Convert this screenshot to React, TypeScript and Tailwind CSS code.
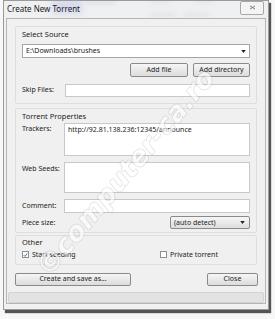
const font = { fontFamily: '"Noto Sans", "Open Sans", sans-serif' };

function Btn({ children, className = "" }: { children: React.ReactNode; className?: string }) {
  return (
    <div
      className={
        "flex items-center justify-center rounded-[2px] border border-[#8a8a8a] bg-gradient-to-b from-[#f6f6f6] to-[#dcdcdc] text-[7px] text-[#222] " +
        className
      }
    >
      {children}
    </div>
  );
}

function Check({ checked }: { checked?: boolean }) {
  return (
    <div className="flex h-[7px] w-[7px] items-center justify-center border border-[#8e8f8f] bg-white">
      {checked && (
        <svg viewBox="0 0 8 8" className="h-[6px] w-[6px]">
          <path d="M1.2 4.2 L3.2 6.2 L6.8 1.4" stroke="#3d5f8d" strokeWidth="1.4" fill="none" />
        </svg>
      )}
    </div>
  );
}

export default function App() {
  return (
    <div className="relative h-[319px] w-[275px] overflow-hidden bg-[#f7f7f7]" style={font}>
      {/* blurred list behind the glass title bar */}
      <div className="absolute left-[52px] top-[-2px] h-[16px] w-[30px] bg-[#7d8fe0] blur-[3px]" />
      <div className="absolute left-[85px] top-[0px] h-[4px] w-[30px] bg-[#a9a9a9] blur-[2px]" />
      <div className="absolute left-[150px] top-[0px] h-[3px] w-[20px] bg-[#b5b5b5] blur-[2px]" />
      <div className="absolute left-[195px] top-[0px] h-[3px] w-[18px] bg-[#b5b5b5] blur-[2px]" />
      <div className="absolute left-[150px] top-[13px] h-[3px] w-[25px] bg-[#b0b0b0] blur-[2px]" />
      <div className="absolute left-[184px] top-[13px] h-[3px] w-[25px] bg-[#b0b0b0] blur-[2px]" />

      {/* window */}
      <div className="relative ml-[3px] flex h-[310px] w-[266px] flex-col border border-[#9a9a9a] bg-[#eceef0]/80 shadow-[2px_3px_1px_#555]">
        {/* title bar */}
        <div className="flex h-[17px] items-center justify-between pl-[3px] pr-[4px]">
          <span className="text-[8px] text-[#1a1a1a]">Create New Torrent</span>
          <div className="mt-[-3px] flex h-[14px] w-[24px] items-center justify-center rounded-[2px] border border-[#a9a9a9] bg-[#f4f4f4]">
            <svg viewBox="0 0 8 6" className="h-[5px] w-[7px]">
              <path d="M1 1 L7 5 M7 1 L1 5" stroke="#777" strokeWidth="1.2" />
            </svg>
          </div>
        </div>

        {/* client area */}
        <div className="mx-[2px] mb-[5px] flex flex-1 flex-col border border-[#b5b5b5] bg-[#f0f0f0] px-[8px] pt-[7px] text-[7px] text-[#222]">
          {/* Select Source */}
          <div className="rounded-[2px] border border-[#dedede] px-[6px] pb-[6px]">
            <div className="mt-[-1px] pt-[3px] text-[7.5px]">Select Source</div>
            <div className="mt-[4px] flex h-[14px] items-center justify-between border border-[#a5a5a5] bg-white pl-[3px] pr-[3px]">
              <span>E:\Downloads\brushes</span>
              <svg viewBox="0 0 6 4" className="h-[3px] w-[5px]">
                <path d="M0 0 H6 L3 4 Z" fill="#222" />
              </svg>
            </div>
            <div className="mt-[5px] flex justify-end gap-[5px]">
              <Btn className="h-[14px] w-[58px]">Add file</Btn>
              <Btn className="h-[14px] w-[57px]">Add directory</Btn>
            </div>
            <div className="mt-[7px] flex items-center">
              <span className="w-[43px]">Skip Files:</span>
              <div className="h-[13px] flex-1 border border-[#c8c8c8] bg-white" />
            </div>
          </div>

          {/* Torrent Properties */}
          <div className="mt-[4px] rounded-[2px] border border-[#dedede] px-[6px] pb-[3px]">
            <div className="pt-[2px] text-[7.5px]">Torrent Properties</div>
            <div className="mt-[1px] flex">
              <span className="w-[42px] pt-[1px]">Trackers:</span>
              <div className="h-[33px] flex-1 border border-[#c8c8c8] bg-white pl-[3px] pt-[1px]">
                http://92.81.138.236:12345/announce
              </div>
            </div>
            <div className="mt-[6px] flex">
              <span className="w-[42px] pt-[2px]">Web Seeds:</span>
              <div className="h-[31px] flex-1 border border-[#c8c8c8] bg-white" />
            </div>
            <div className="mt-[6px] flex items-center">
              <span className="w-[42px]">Comment:</span>
              <div className="h-[14px] flex-1 border border-[#c8c8c8] bg-white" />
            </div>
            <div className="mt-[3px] flex items-center justify-between">
              <span>Piece size:</span>
              <div className="flex h-[13px] w-[80px] items-center justify-between rounded-[2px] border border-[#8a8a8a] bg-gradient-to-b from-[#f6f6f6] to-[#dedede] pl-[3px] pr-[4px]">
                <span>(auto detect)</span>
                <svg viewBox="0 0 6 4" className="h-[3px] w-[5px]">
                  <path d="M0 0 H6 L3 4 Z" fill="#222" />
                </svg>
              </div>
            </div>
          </div>

          {/* Other */}
          <div className="mt-[2px] rounded-[2px] border border-[#dedede] px-[6px] pb-[4px]">
            <div className="pt-[1px] text-[7.5px]">Other</div>
            <div className="mt-[1px] flex items-center">
              <div className="flex w-[138px] items-center gap-[3px]">
                <Check checked />
                <span>Start seeding</span>
              </div>
              <div className="flex items-center gap-[3px]">
                <Check />
                <span>Private torrent</span>
              </div>
            </div>
          </div>

          {/* buttons */}
          <div className="mt-[8px] flex justify-between">
            <Btn className="h-[13px] w-[116px]">Create and save as...</Btn>
            <Btn className="mr-[-1px] h-[13px] w-[51px]">Close</Btn>
          </div>

          <div className="mx-[-7px] mt-[6px] h-[11px] rounded-[2px] border border-[#d2d2d2] bg-[#e3e3e3]" />
        </div>
      </div>

      {/* watermark */}
      <div
        className="pointer-events-none absolute left-[42px] top-[252px] origin-left -rotate-[50deg] whitespace-nowrap text-[27px] font-bold italic text-white opacity-60"
        style={{ textShadow: "0 0 1px #8c8c8c, 0 0 1px #8c8c8c", fontFamily: '"DejaVu Sans", sans-serif' }}
      >
        ©computer-ca.ro
      </div>
    </div>
  );
}
